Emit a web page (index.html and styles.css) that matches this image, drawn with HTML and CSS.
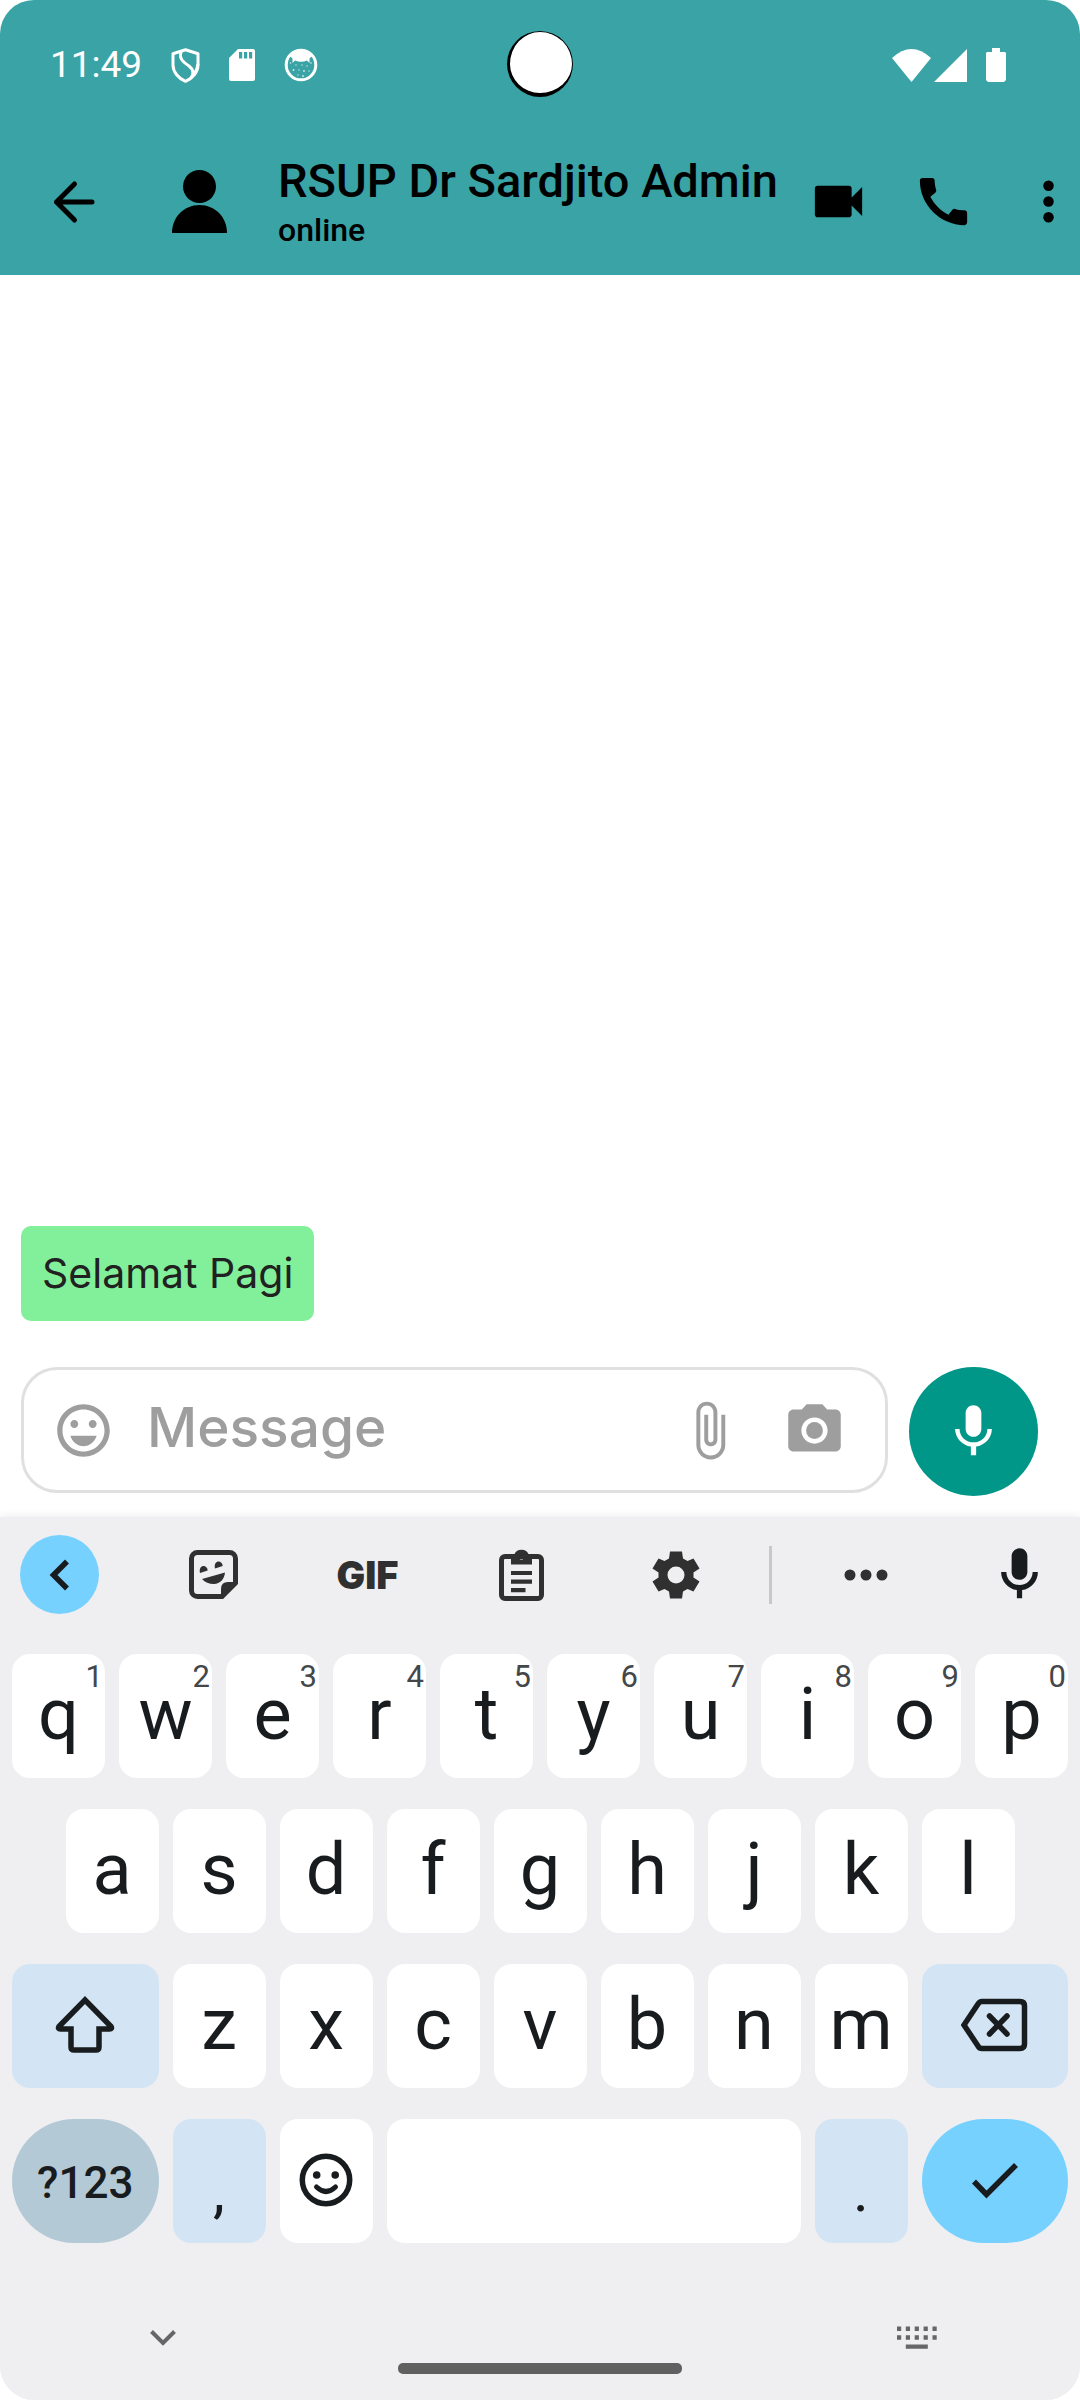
FILE: index.html
```html
<!DOCTYPE html>
<html lang="id">
<head>
<meta charset="utf-8">
<meta name="viewport" content="width=device-width, initial-scale=1">
<title>RSUP Dr Sardjito Admin</title>
<link rel="stylesheet" href="styles.css">
</head>
<body>
<div class="screen">
  <header class="top">
    <div class="status">
      <span class="clock">11:49</span>
      <svg width="29" height="35" viewBox="0 0 29 35" fill="none" stroke="#fff" stroke-width="3" stroke-linejoin="round"><path d="M14.500 1.700 27 5.700V17c0 7-5.500 13.500-12.500 16.300C7.500 30.500 2 24 2 17V5.700z"/><path d="M10.500 3C7 11 13 14.500 18 18c5 4 5 8 2 12M27 16c-1 6-3 10-7 13"/></svg>
      <svg width="26" height="32" viewBox="0 0 26 32"><path fill="#fff" fill-rule="evenodd" d="M9 0h15a2 2 0 0 1 2 2v28a2 2 0 0 1-2 2H2a2 2 0 0 1-2-2V9zM10 3v6.500h3.200V3zm5 0v6.500h3.200V3zm5 0v6.500h3.200V3z"/></svg>
      <svg width="34" height="34" viewBox="0 0 34 34"><circle cx="17" cy="17" r="14.800" fill="none" stroke="#fff" stroke-width="3"/><path fill="#fff" d="M6 8Q17-4 28 8L25.500 10.500V15L23 12.500Q17 15 11 12.500L8.500 15V10.500z"/><g fill="#fff" opacity=".8"><circle cx="6.500" cy="15" r=".8"/><circle cx="12" cy="17" r=".7"/><circle cx="18" cy="17" r=".7"/><circle cx="23" cy="18" r=".7"/><circle cx="27" cy="15" r=".8"/><circle cx="9.500" cy="22" r=".9"/><circle cx="15" cy="22" r=".7"/><circle cx="20" cy="23" r=".9"/><circle cx="25" cy="23" r=".7"/><circle cx="14" cy="27" r=".7"/><circle cx="19" cy="28" r=".9"/></g></svg>
      <span class="status-right">
        <svg width="39" height="33" viewBox="0 0 39 33"><path fill="#fff" d="M0 9Q19.500-9 39 9L19.500 33z"/></svg>
        <svg width="33" height="33" viewBox="0 0 33 33"><path fill="#fff" d="M33 0v33H0z"/></svg>
        <svg class="battery" width="20" height="34" viewBox="0 0 20 34"><path fill="#fff" d="M6 0h8v4h5l1 1v27l-2 2H2l-2-2V5l1-1h5z"/></svg>
      </span>
      <span class="camera"></span>
    </div>
    <div class="appbar">
      <button class="icon-btn back" aria-label="Back"><svg width="48" height="48" viewBox="0 0 48 48" fill="none" stroke="#000" stroke-width="5" stroke-linecap="round" stroke-linejoin="round"><path d="M42 24H6.500M24.500 6 6.500 24l18 18"/></svg></button>
      <svg class="avatar" width="55" height="64" viewBox="0 0 55 64"><circle cx="27.500" cy="16.500" r="16.500"/><path d="M0 63C0 47 12 35 27.500 35S55 47 55 63z"/></svg>
      <div class="contact"><h1>RSUP Dr Sardjito Admin</h1><p>online</p></div>
      <div class="actions">
        <button class="icon-btn" aria-label="Video call"><svg class="icon" viewBox="0 0 24 24"><path d="M17 10.500V7c0-.55-.45-1-1-1H4c-.55 0-1 .45-1 1v10c0 .55.45 1 1 1h12c.55 0 1-.45 1-1v-3.500l4 4v-11l-4 4z"/></svg></button>
        <button class="icon-btn" aria-label="Call"><svg class="icon" viewBox="0 0 24 24"><path d="M20.010 15.380c-1.230 0-2.420-.2-3.530-.56-.35-.12-.74-.03-1.010.24l-1.570 1.970c-2.830-1.350-5.480-3.900-6.890-6.830l1.950-1.660c.27-.28.35-.67.24-1.020-.37-1.110-.56-2.300-.56-3.530 0-.54-.45-.99-.99-.99H4.190C3.650 3 3 3.240 3 3.990 3 13.280 10.730 21 20.010 21c.71 0 .99-.63.99-1.180v-3.450c0-.54-.45-.99-.99-.99z"/></svg></button>
        <button class="icon-btn" aria-label="More options"><svg class="icon" viewBox="0 0 24 24"><circle cx="12" cy="6" r="2"/><circle cx="12" cy="12" r="2"/><circle cx="12" cy="18" r="2"/></svg></button>
      </div>
    </div>
  </header>

  <main class="messages"><p class="bubble">Selamat Pagi</p></main>

  <form class="composer">
    <div class="field">
      <button type="button" class="icon-btn" aria-label="Emoji"><svg class="icon" viewBox="0 0 24 24"><path d="M11.990 2C6.470 2 2 6.480 2 12s4.470 10 9.990 10C17.520 22 22 17.520 22 12S17.520 2 11.990 2zM12 20c-4.420 0-8-3.580-8-8s3.580-8 8-8 8 3.580 8 8-3.580 8-8 8zm3.500-9c.83 0 1.500-.67 1.500-1.500S16.330 8 15.500 8 14 8.670 14 9.500s.67 1.500 1.500 1.500zm-7 0c.83 0 1.500-.67 1.500-1.500S9.330 8 8.500 8 7 8.670 7 9.500 7.670 11 8.500 11zM7 14c.7 2.300 2.700 4 5 4s4.300-1.700 5-4z"/></svg></button>
      <input type="text" placeholder="Message" aria-label="Message">
      <button type="button" class="icon-btn" aria-label="Attach file"><svg class="icon" viewBox="0 0 24 24"><path d="M16.500 6v11.500c0 2.210-1.790 4-4 4s-4-1.790-4-4V5c0-1.380 1.120-2.500 2.500-2.500s2.500 1.120 2.500 2.500v10.500c0 .55-.45 1-1 1s-1-.45-1-1V6H10v9.500c0 1.380 1.120 2.500 2.500 2.500s2.500-1.120 2.500-2.500V5c0-2.210-1.790-4-4-4S7 2.790 7 5v12.500c0 3.040 2.460 5.500 5.500 5.500s5.500-2.460 5.500-5.500V6h-1.500z"/></svg></button>
      <button type="button" class="icon-btn camera-btn" aria-label="Camera"><svg class="icon" viewBox="0 0 24 24"><circle cx="12" cy="12" r="3.200"/><path d="M9 2L7.170 4H4c-1.100 0-2 .9-2 2v12c0 1.100.9 2 2 2h16c1.100 0 2-.9 2-2V6c0-1.100-.9-2-2-2h-3.170L15 2H9zm3 15c-2.760 0-5-2.240-5-5s2.240-5 5-5 5 2.240 5 5-2.240 5-5 5z"/></svg></button>
    </div>
    <button type="button" class="record" aria-label="Record voice message"><svg class="icon" viewBox="0 0 24 24"><path d="M12 14c1.660 0 2.990-1.340 2.990-3L15 5c0-1.660-1.340-3-3-3S9 3.340 9 5v6c0 1.660 1.340 3 3 3zm5.300-3c0 3-2.540 5.100-5.300 5.100S6.700 14 6.700 11H5c0 3.410 2.720 6.230 6 6.720V21h2v-3.280c3.280-.48 6-3.300 6-6.720h-1.700z"/></svg></button>
  </form>

  <section class="keyboard" aria-label="Keyboard">
    <div class="toolbar">
      <div class="tools">
        <button class="tool collapse" aria-label="Collapse toolbar"><svg width="40" height="40" viewBox="0 0 40 40" fill="none" stroke="#191c1e" stroke-width="5.500"><path d="M27 6.500 13.500 20 27 33.500"/></svg></button>
        <button class="tool" aria-label="Stickers"><svg width="49" height="49" viewBox="0 0 49 49"><path d="M8.500 2.500h32a6 6 0 0 1 6 6V33L33 46.500H8.500a6 6 0 0 1-6-6v-32a6 6 0 0 1 6-6z" fill="none" stroke="#303030" stroke-width="5"/><g fill="#303030"><path d="M32 48v-9q0-7 7-7h9v2L34 48.500zM13 29l23-6.500C35.500 29 31 34 25 34c-5 0-9-1.500-12-5zM11 23C9 14 18.500 14 18.700 20.500zM26 18.500C24 9.500 33.500 9.500 33.700 16z"/></g></svg></button>
        <button class="tool gif">GIF</button>
        <button class="tool" aria-label="Clipboard"><svg width="45" height="52" viewBox="0 0 45 52"><rect x="2.500" y="7.500" width="40" height="42" rx="3.500" fill="none" stroke="#303030" stroke-width="5"/><path fill="#303030" fill-rule="evenodd" d="M12 15.500V6h3a8 8 0 0 1 15 0h3v9.500zM22.500 5a2.800 2.800 0 1 0 0 5.600 2.800 2.800 0 1 0 0-5.600zM12 22h21v4H12zM12 30.500h21v4.200H12zM12 39h14.500v4.200H12z"/></svg></button>
        <button class="tool" aria-label="Settings"><svg width="48" height="48" viewBox="-24 -24 48 48"><path fill="#303030" fill-rule="evenodd" d="M-6-23.500H6L7-16.500 11.500-14 17.500-16.500 23.500-6.500 17.500-2.500V2.500L23.500 6.500 17.500 16.500 11.500 14 7 16.500 6 23.500H-6L-7 16.500-11.500 14-17.500 16.500-23.500 6.500-17.500 2.500V-2.500L-23.500-6.500-17.500-16.500-11.500-14-7-16.500zM0-8.500a8.500 8.500 0 1 0 0 17 8.500 8.500 0 1 0 0-17z"/></svg></button>
      </div>
      <span class="divider"></span>
      <div class="tools">
        <button class="tool" aria-label="More"><svg width="44" height="12" viewBox="0 0 44 12" fill="#303030"><circle cx="6" cy="6" r="5.500"/><circle cx="22" cy="6" r="5.500"/><circle cx="38" cy="6" r="5.500"/></svg></button>
        <button class="tool" aria-label="Voice typing"><svg class="icon" viewBox="0 0 24 24"><path d="M12 14c1.660 0 3-1.340 3-3V5c0-1.660-1.340-3-3-3S9 3.340 9 5v6c0 1.660 1.340 3 3 3zm5-3c0 2.760-2.240 5-5 5s-5-2.240-5-5H5c0 3.530 2.610 6.430 6 6.920V21h2v-3.080c3.390-.49 6-3.390 6-6.920h-2z"/></svg></button>
      </div>
    </div>

    <div class="keys">
      <button class="key">q<span class="hint">1</span></button>
      <button class="key">w<span class="hint">2</span></button>
      <button class="key">e<span class="hint">3</span></button>
      <button class="key">r<span class="hint">4</span></button>
      <button class="key">t<span class="hint">5</span></button>
      <button class="key">y<span class="hint">6</span></button>
      <button class="key">u<span class="hint">7</span></button>
      <button class="key">i<span class="hint">8</span></button>
      <button class="key">o<span class="hint">9</span></button>
      <button class="key">p<span class="hint">0</span></button>

      <button class="key row-start">a</button>
      <button class="key">s</button>
      <button class="key">d</button>
      <button class="key">f</button>
      <button class="key">g</button>
      <button class="key">h</button>
      <button class="key">j</button>
      <button class="key">k</button>
      <button class="key">l</button>

      <button class="key wide tint" aria-label="Shift"><svg width="60" height="58" viewBox="0 0 60 58" fill="none" stroke="#191c1e" stroke-width="5.500"><path d="M30 4 56 30.500Q57.500 33 54.500 33H44v18q0 3-3 3H19q-3 0-3-3V33H5.500Q2.500 33 4 30.500z"/></svg></button>
      <button class="key">z</button>
      <button class="key">x</button>
      <button class="key">c</button>
      <button class="key">v</button>
      <button class="key">b</button>
      <button class="key">n</button>
      <button class="key">m</button>
      <button class="key wide tint" aria-label="Backspace"><svg width="67" height="54" viewBox="0 0 67 54" fill="none" stroke="#191c1e" stroke-width="5.500" stroke-linecap="round"><path d="M3 27 17 6q1.500-2.500 4-2.500h38q4.500 0 4.500 4.500v38q0 4.500-4.500 4.500H21q-2.500 0-4-2.500zM28.500 18 46 36M46 18 28.500 36"/></svg></button>

      <button class="key wide pill symbols">?123</button>
      <button class="key tint mark">,</button>
      <button class="key" aria-label="Emoji"><svg width="54" height="54" viewBox="0 0 54 54" fill="none" stroke="#191c1e" stroke-width="5.500"><circle cx="27" cy="27" r="23.700"/><path d="M17.500 34q9.500 9 19 0" stroke-width="5" stroke-linecap="round"/><g fill="#191c1e" stroke="none"><circle cx="17.700" cy="22" r="3.800"/><circle cx="36.200" cy="22" r="3.800"/></g></svg></button>
      <button class="key space" aria-label="Space"></button>
      <button class="key tint mark">.</button>
      <button class="key wide pill enter" aria-label="Done"><svg width="64" height="64" viewBox="0 0 64 64" fill="none" stroke="#191c1e" stroke-width="5.500"><path d="M11 33.500 23.500 46.500 53 17"/></svg></button>
    </div>

    <nav class="nav">
      <button class="icon-btn" aria-label="Hide keyboard"><svg width="64" height="64" viewBox="0 0 64 64" fill="none" stroke="#666" stroke-width="4"><path d="M20.500 26.500 32 38 43.500 26.500"/></svg></button>
      <span class="home"></span>
      <button class="icon-btn" aria-label="Switch keyboard"><svg width="64" height="64" viewBox="0 0 64 64" fill="#666"><path d="M12 21.500h4.200v4.500H12zm8.800 0H25v4.500h-4.200zm8.900 0h4.200v4.500h-4.200zm8.900 0h4.200v4.500h-4.200zm8.900 0h4.200v4.500h-4.200zM12 30.200h4.200v4.500H12zm8.800 0H25v4.500h-4.200zm8.900 0h4.200v4.500h-4.200zm8.900 0h4.200v4.500h-4.200zm8.900 0h4.200v4.500h-4.200zM20.800 39.500h22v4.300h-22z"/></svg></button>
    </nav>
  </section>
</div>
</body>
</html>
```
FILE: styles.css
```css
* {
  box-sizing: border-box;
}

body {
  margin: 0;
  background: #fff;
  font-family: Roboto, "Liberation Sans", sans-serif;
}

h1,
p {
  margin: 0;
}

svg {
  display: block;
  flex: none;
}

button {
  display: flex;
  align-items: center;
  justify-content: center;
  margin: 0;
  padding: 0;
  border: 0;
  background: none;
  color: inherit;
  font-family: inherit;
}

.icon {
  width: 63px;
  height: 63px;
  fill: currentColor;
}

.icon-btn {
  flex: none;
}

.screen {
  display: flex;
  flex-direction: column;
  min-height: 100vh;
  overflow: hidden;
  border-radius: 34px;
}

/* Header */
.top {
  background: #39a3a5;
  color: #000;
}

.status {
  position: relative;
  display: flex;
  align-items: center;
  gap: 29px;
  height: 128px;
  padding: 2px 74px 0 50px;
  color: #fff;
}

.clock {
  font-size: 37px;
  line-height: 44px;
}

.status-right {
  display: flex;
  align-items: center;
  gap: 3px;
  margin-left: auto;
}

.battery {
  margin-left: 16px;
}

.camera {
  position: absolute;
  top: 31px;
  left: 50%;
  width: 66px;
  height: 66px;
  margin-left: -33px;
  border: solid #000;
  border-width: 1px 1px 4px 3px;
  border-radius: 50%;
  background: #fff;
}

.appbar {
  display: flex;
  align-items: center;
  height: 147px;
  padding-left: 50px;
}

.avatar {
  margin: 0 51px 0 74px;
}

.contact {
  flex: 1;
  min-width: 0;
  white-space: nowrap;
}

.contact h1 {
  font-size: 47px;
  font-weight: 500;
  line-height: 56px;
}

.contact p {
  font-size: 32px;
  font-weight: 500;
  line-height: 42px;
}

.actions {
  display: flex;
  gap: 42px;
}

/* Conversation */
.messages {
  display: flex;
  flex: 1;
  flex-direction: column;
  align-items: flex-start;
  justify-content: flex-end;
  padding: 21px 21px 46px;
}

.bubble {
  padding: 21px;
  border-radius: 10px;
  background: #82f09a;
  color: #212121;
  font-family: Inter, sans-serif;
  font-size: 41px;
  line-height: 53px;
}

.composer {
  display: flex;
  align-items: flex-start;
  gap: 21px;
  padding: 0 42px 21px 21px;
}

.field {
  display: flex;
  flex: 1;
  align-items: center;
  min-width: 0;
  height: 126px;
  padding: 0 39px 0 28px;
  border: 3px solid #e0e0e0;
  border-radius: 36px;
  color: #9e9e9e;
}

.field input {
  flex: 1;
  width: 0;
  min-width: 0;
  margin: 0 29px 0 32px;
  padding: 0 0 6px;
  border: 0;
  outline: 0;
  background: none;
  font-family: Inter, sans-serif;
  font-size: 55px;
  font-weight: 500;
}

.field input::placeholder {
  color: #9e9e9e;
  opacity: 1;
}

.camera-btn {
  margin-left: 42px;
}

.record {
  flex: none;
  width: 129px;
  height: 129px;
  border-radius: 50%;
  background: #009688;
  color: #fff;
}

/* Keyboard */
.keyboard {
  background: #efeff2;
  box-shadow: 0 -1px 8px rgba(0, 0, 0, 0.08);
  color: #191c1e;
}

.toolbar {
  display: flex;
  align-items: center;
  justify-content: space-between;
  padding: 18px 21px 40px 20px;
}

.tools {
  display: flex;
  gap: 75px;
}

.tool {
  width: 79px;
  height: 79px;
}

.collapse {
  border-radius: 50%;
  background: #77d1ff;
}

.gif {
  color: #303030;
  font-family: Inter, sans-serif;
  font-size: 38px;
  font-weight: 900;
}

.divider {
  width: 3px;
  height: 58px;
  background: #c8c8ca;
}

.keys {
  display: grid;
  grid-template-columns: repeat(20, 1fr);
  gap: 31px 14px;
  padding: 0 12px;
}

.key {
  position: relative;
  grid-column: span 2;
  height: 124px;
  padding-bottom: 2px;
  border-radius: 18px;
  background: #fff;
  font-size: 72px;
  line-height: 80px;
}

.row-start {
  grid-column: 2 / span 2;
}

.wide {
  grid-column: span 3;
}

.space {
  grid-column: span 8;
}

.tint {
  background: #d3e5f4;
}

.pill {
  border-radius: 62px;
}

.symbols {
  padding: 4px 0 0;
  background: #b4c9d6;
  font-size: 44px;
  font-weight: 500;
}

.mark {
  padding: 20px 0 0;
  font-size: 60px;
}

.enter {
  background: #77d1ff;
}

.hint {
  position: absolute;
  top: 5px;
  right: 2px;
  color: #44474a;
  font-size: 31px;
  line-height: 36px;
}

.nav {
  display: flex;
  align-items: flex-start;
  justify-content: space-between;
  height: 157px;
  padding: 62px 131px 26px;
}

.home {
  align-self: flex-end;
  width: 284px;
  height: 11px;
  border-radius: 5px;
  background: #606060;
}
```
